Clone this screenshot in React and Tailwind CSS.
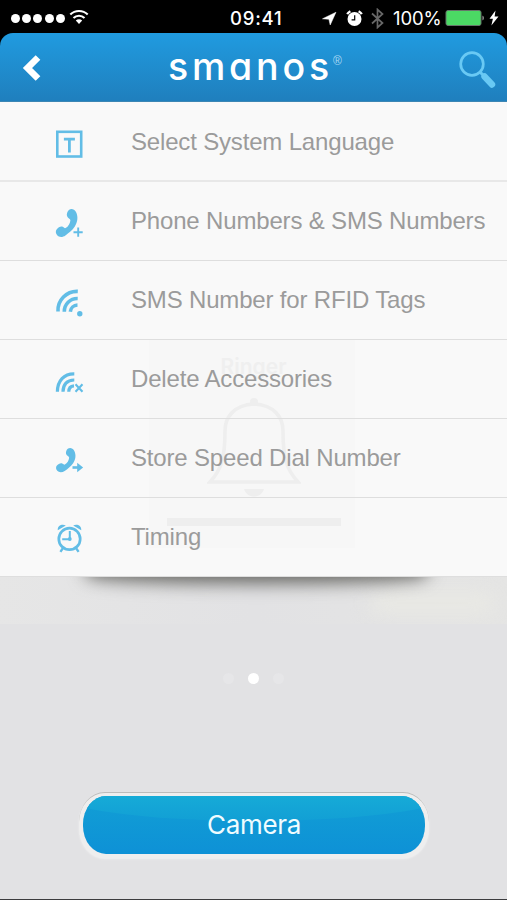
function Wifi() {
    return (
        <svg width="20" height="16" viewBox="0 0 20 16" fill="none" stroke="#fff">
            <path d="M1.3 5.6a12.3 12.3 0 0 1 17.4 0" strokeWidth="2.1" />
            <path d="M4.5 9a7.8 7.8 0 0 1 11 0" strokeWidth="2.1" />
            <path d="M10 15l-3.2-3.4a4.6 4.6 0 0 1 6.4 0z" fill="#fff" stroke="none" />
        </svg>
    );
}

function StatusBar() {
    return (
        <div className="relative flex h-[33px] items-center bg-black pt-[3px] font-['Inter',sans-serif] text-white">
            <div className="flex gap-[2.2px] pl-[11px]">
                {[0, 1, 2, 3, 4].map((i) => (
                    <span key={i} className="size-[9px] rounded-full bg-white" />
                ))}
            </div>
            <div className="-mt-[3px] ml-1">
                <Wifi />
            </div>
            <span className="absolute left-[230px] top-[6px] text-[18.5px] font-medium leading-6 tracking-[0.8px]">09:41</span>
            <div className="absolute left-[322px] top-0 flex h-[36px] items-center">
                <svg width="15" height="15" viewBox="0 0 15 15">
                    <path d="M0.5 7.8L14 1.2L8.2 14L6.9 8.3z" fill="#fff" stroke="#fff" strokeWidth="0.5" />
                </svg>
                <svg className="ml-[9px]" width="17" height="17" viewBox="0 0 17 17">
                    <circle cx="8.5" cy="9" r="7" fill="#fff" />
                    <path d="M1.2 4.2a9 9 0 0 1 3.2-2.9M15.8 4.2a9 9 0 0 0-3.2-2.9" stroke="#fff" strokeWidth="2.4" fill="none" />
                    <path d="M8.7 5.3v4.5H5.6" stroke="#000" strokeWidth="1.2" fill="none" />
                </svg>
                <svg className="ml-[8px]" width="13" height="21" viewBox="0 0 13 21">
                    <path d="M1 5.5l10.5 9.5L6.5 19.5V1.5l5 4.5L1 15.5" stroke="#686868" strokeWidth="1.7" fill="none" />
                </svg>
                <span className="ml-[9px] w-[50px] whitespace-nowrap text-[18.5px] leading-6 tracking-[-0.1px]">100%</span>
                <svg className="ml-[2px]" width="40" height="18" viewBox="0 0 40 18">
                    <rect x="1" y="1.5" width="35" height="15" rx="2" fill="#4bd964" stroke="#66756a" />
                    <path d="M37.5 6.5a3 3 0 0 1 0 5z" fill="#aaa" />
                </svg>
                <svg className="ml-[4px]" width="10" height="16" viewBox="0 0 10 16">
                    <path d="M6.5 0.5L0.5 8.8h3.4L2.4 15.5L9.5 6.5H5.6z" fill="#fff" />
                </svg>
            </div>
        </div>
    );
}

function Header() {
    return (
        <div className="bg-black">
            <header className="flex h-[69px] items-center rounded-t-[13px] border-b border-[#3c86b4] bg-linear-to-b from-[#209be0] to-[#1f7fbd]">
                <svg className="ml-[22px] mt-px" width="20" height="26" viewBox="0 0 20 26">
                    <path d="M16 2.5L5.5 13L16 23.5" fill="none" stroke="#fff" strokeWidth="6.6" />
                </svg>
                <h1 className="ml-[126px] flex w-[176px] whitespace-nowrap font-['Inter',sans-serif] text-white">
                    <span className="text-[37.5px] font-medium leading-[48px] tracking-[3.8px] [font-feature-settings:'cv11']">smanos</span>
                    <span className="mt-[10px] font-['Liberation_Sans',Arial,sans-serif] text-[12px] leading-4 text-[#a9d8f3]">®</span>
                </h1>
                <svg className="ml-[114px] mt-[6px]" width="38" height="40" viewBox="0 0 38 40" stroke="#69c9f4" fill="none">
                    <circle cx="14" cy="14" r="11.3" strokeWidth="2.7" />
                    <path d="M22 22l5 5" strokeWidth="3" />
                    <path d="M26.5 26.5l7.5 8" strokeWidth="6.4" strokeLinecap="round" />
                </svg>
            </header>
        </div>
    );
}

const HANDSET = 'M13.2 1.2C15.4-0.4 18.6 0.8 20 3.6C22.4 8.4 21.6 13.8 18.8 18C16.4 21.8 12.6 24.6 9.4 26.9C6.6 29 3 28.8 1.2 26.8C-0.4 25-0.6 22.6 0.6 21.1C2.2 19 4.4 17.6 6.2 18.1C8 18.6 8.4 20.2 9.6 19.6C12.4 18 14 15.2 14.4 11.8C14.4 10.4 11.8 9.8 11 7.6C10.4 5.4 11.4 2.6 13.2 1.2Z';

function Icon({ name }) {
    return (
        <svg width="30" height="32" viewBox="0 0 30 32" fill="none" stroke="#62bde6">
            {name === 'language' && (
                <>
                    <rect x="2.3" y="2.8" width="23.9" height="24.7" strokeWidth="2.6" />
                    <path d="M8.9 10.2h11M14.4 10.2v13.4" strokeWidth="2.8" />
                </>
            )}
            {name === 'phone' && (
                <>
                    <path d={HANDSET} fill="#62bde6" stroke="none" transform="translate(1 .5)" />
                    <path d="M18.5 24.2h9.2M23.2 19.6v9.2" stroke="#f9f9f9" strokeWidth="4" />
                    <path d="M18.5 24.2h9.2M23.2 19.6v9.2" strokeWidth="1.9" />
                </>
            )}
            {name === 'rfid' && (
                <>
                    <path d="M3 24.5A19 19 0 0 1 22.8 4.4M9.3 24.8A13 13 0 0 1 22.7 11.5M15.3 24.7A7.5 7.5 0 0 1 22.5 18" strokeWidth="3.6" />
                    <circle cx="24.8" cy="26.8" r="2.7" fill="#62bde6" stroke="none" />
                </>
            )}
            {name === 'delete' && (
                <>
                    <path d="M2.4 25.8C2.4 15 9 7.6 19.3 7.8M8 25.8C8 18.5 12 13.9 19.3 14M13.8 25.8C13.8 22 16 20 19 19.8" strokeWidth="3.2" />
                    <path d="M20.5 18.3l7 7.4M27.5 18.3l-7 7.4" strokeWidth="2.1" />
                </>
            )}
            {name === 'dial' && (
                <>
                    <path d={HANDSET} fill="#62bde6" stroke="none" transform="translate(1.2 2.5) scale(.9 .87)" />
                    <path d="M17 22.5h11" stroke="#f9f9f9" strokeWidth="4.6" />
                    <path d="M17.5 22.5h6" strokeWidth="2.6" />
                    <path d="M22.2 17.8l5.9 4.7l-5.9 4.7z" fill="#62bde6" stroke="none" />
                </>
            )}
            {name === 'timing' && (
                <>
                    <circle cx="14.5" cy="14.9" r="10.7" strokeWidth="2.7" />
                    <path d="M14.8 7.1v8.2H7.2" strokeWidth="2" />
                    <circle cx="14.8" cy="15" r="1.9" fill="#62bde6" stroke="none" />
                    <path d="M2.8 6.2C2.2 2 6.5-0.6 10.8 1.4zM26.2 6.2C26.8 2 22.5-0.6 18.2 1.4z" fill="#62bde6" stroke="none" />
                    <path d="M8 24l-2.6 3.8M21 24l2.6 3.8" strokeWidth="2.3" />
                </>
            )}
        </svg>
    );
}

const items = [
    { icon: 'language', label: 'Select System Language' },
    { icon: 'phone', label: 'Phone Numbers & SMS Numbers' },
    { icon: 'rfid', label: 'SMS Number for RFID Tags' },
    { icon: 'delete', label: 'Delete Accessories' },
    { icon: 'dial', label: 'Store Speed Dial Number' },
    { icon: 'timing', label: 'Timing' },
];

/* Ringer card faintly showing through the menu */
function RingerGhost() {
    return (
        <div className="absolute left-[149px] top-[238px] flex h-[208px] w-[206px] flex-col items-center bg-[#f7f7f7] pl-[3px]">
            <span className="mt-[15px] font-['Inter',sans-serif] text-[21px] font-semibold leading-6 text-[#efefef]">Ringer</span>
            <svg className="mt-[19px]" width="94" height="102" viewBox="0 0 94 102" fill="none" stroke="#eeeeee" strokeWidth="3.6">
                <circle cx="47" cy="4" r="4" fill="#eeeeee" stroke="none" />
                <path d="M47 6C27 7 18 19 18 33C18 61 14 72 3 84H91C80 72 76 61 76 33C76 19 67 7 47 6Z" />
                <path d="M37 91h20c-3 10-17 10-20 0z" fill="#eeeeee" stroke="none" />
            </svg>
            <span className="mt-[18px] h-2 w-[174px] bg-[#eeeeee]" />
        </div>
    );
}

function Menu() {
    return (
        <div className="relative bg-[#f9f9f9]">
            <RingerGhost />
            <ul className="relative">
                {items.map(({ icon, label }) => (
                    <li key={icon} className="flex h-[79px] items-center border-b border-[#dedede] first:h-[80px] first:border-b-2 first:border-[#e8e8e8] first:pt-[2px]">
                        <span className="ml-[55px] mt-[5px] w-[76px]">
                            <Icon name={icon} />
                        </span>
                        <span className="whitespace-nowrap font-['Liberation_Sans',Arial,sans-serif] text-[24px] leading-8 tracking-[-0.17px] text-[#9b9b9b]">
                            {label}
                        </span>
                    </li>
                ))}
            </ul>
        </div>
    );
}

export default function App() {
    return (
        <div className="flex h-[900px] w-[507px] flex-col overflow-hidden border-b border-[#3c3c3e] bg-[#e2e2e4]">
            <StatusBar />
            <Header />
            <Menu />
            <div className="relative h-[47px] shrink-0 overflow-hidden bg-linear-to-r from-[#e6e6e6] via-[#e2e2e4] to-[#e5e5e4]">
                <div className="absolute left-[370px] top-[16px] h-5 w-[125px] rounded-full bg-[#e9e9e4] blur-[9px]" />
                <div className="absolute left-[86px] top-[-30px] h-[36px] w-[341px] rounded-[50%/8px] bg-[#62625e] blur-[9px]" />
            </div>
            <div className="mt-[49px] flex justify-center gap-[14px]">
                <span className="size-[11px] rounded-full bg-[#e6e6e8]" />
                <span className="size-[11px] rounded-full bg-white" />
                <span className="size-[11px] rounded-full bg-[#e6e6e8]" />
            </div>
            <div className="ml-[79px] mt-[108px] h-[66px] w-[350px] rounded-[26px/30px] border-t border-[#bcbcbb] bg-[#eeeeee] px-1 pb-1 pt-[3px] shadow-[0_1px_2px_#f1f1f2]">
                <button className="relative flex h-[58px] w-full items-center justify-center overflow-hidden rounded-[23px/28px] bg-linear-to-b from-[#129fd5] to-[#0e91d6]">
                    <span className="absolute -left-[40px] -top-[40px] h-[65px] w-[422px] rounded-[50%] bg-linear-to-b from-[#16abd7] from-60% to-[#129fd5]" />
                    <span className="relative font-['Inter',sans-serif] text-[26px] leading-8 tracking-[-0.3px] text-[#effcff]">Camera</span>
                </button>
            </div>
        </div>
    );
}
